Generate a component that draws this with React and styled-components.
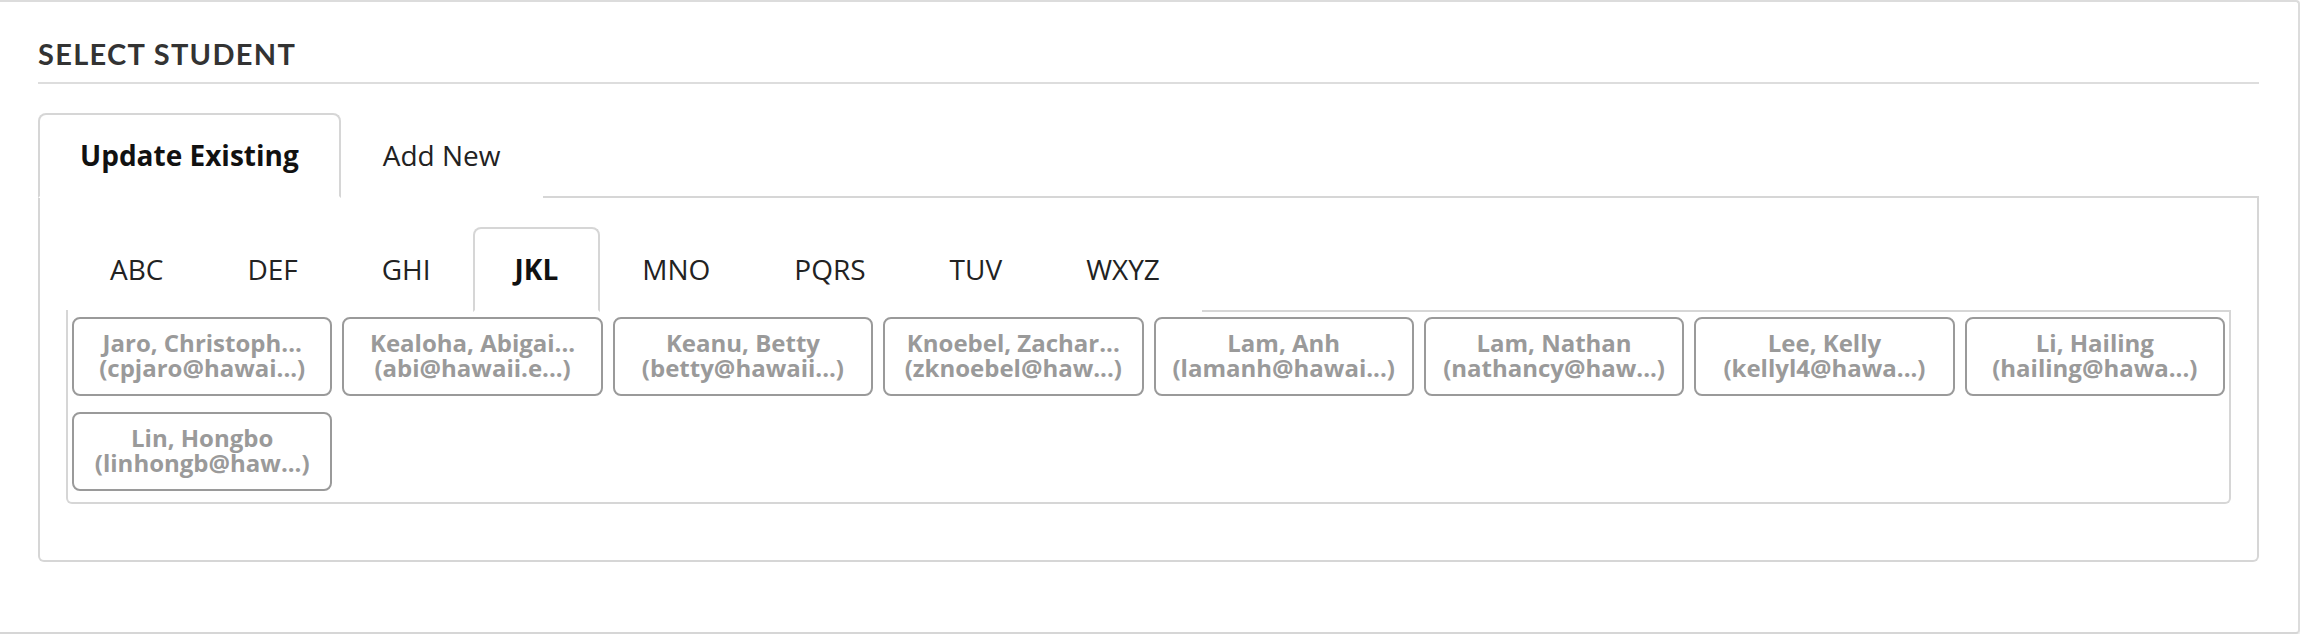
import React from "react";
import styled, { createGlobalStyle, css } from "styled-components";

const Global = createGlobalStyle`
  html, body { margin: 0; padding: 0; background: #ffffff; }
  body { font-family: "Open Sans", "Liberation Sans", sans-serif; color: #222; }
  * { box-sizing: border-box; }
`;

const Card = styled.section`
  width: 2300px;
  border-top: 2px solid #dcdcdc;
  border-right: 2px solid #dcdcdc;
  border-bottom: 2px solid #d6d6d6;
  border-radius: 0 4px 4px 0;
  box-shadow: 0 3px 4px rgba(0, 0, 0, 0.1);
  padding: 0 39px 70px 38px;
`;

const Title = styled.h2`
  margin: 0;
  padding: 34px 0 10px;
  font-family: Lato, "Open Sans", sans-serif;
  font-weight: 700;
  font-size: 29px;
  line-height: 36px;
  letter-spacing: 1.3px;
  color: #333;
  border-bottom: 2px solid #dddddd;
`;

const TabList = styled.div`
  display: flex;
  align-items: flex-end;
  border-bottom: 2px solid #d6d6d6;
  margin-top: ${(p) => (p.$outer ? "29px" : "0")};
  padding-left: ${(p) => (p.$outer ? "0" : "2px")};
`;

const Tab = styled.button`
  appearance: none;
  background: #fff;
  font-family: "Open Sans", "Liberation Sans", sans-serif;
  font-size: 28px;
  line-height: 42px;
  padding: 19px 40px 20px;
  margin: 0 0 -2px;
  border: 2px solid transparent;
  border-radius: 8px 8px 0 0;
  color: #222;
  font-weight: 400;
  cursor: pointer;
  ${(p) =>
    p.$active &&
    css`
      border-color: #d6d6d6;
      border-bottom-color: #fff;
      font-weight: 700;
      color: #111;
    `}
`;

const Panel = styled.div`
  border: 2px solid #d6d6d6;
  border-top: none;
  border-radius: 0 0 6px 6px;
  padding: ${(p) => (p.$inner ? "5px 4px 11px" : "29px 26px 56px")};
`;

const Grid = styled.div`
  display: grid;
  grid-template-columns: repeat(8, 1fr);
  column-gap: 10px;
  row-gap: 16px;
`;

const StudentButton = styled.button`
  appearance: none;
  background: #fff;
  border: 2px solid #9a9a9a;
  border-radius: 8px;
  padding: 11px 6px 14px;
  font-family: "Open Sans", "Liberation Sans", sans-serif;
  font-weight: 700;
  font-size: 24px;
  line-height: 25px;
  color: #9a9a9a;
  text-align: center;
  white-space: nowrap;
  overflow: hidden;
  cursor: pointer;
`;

const Line = styled.span`
  display: block;
`;

const letters = ["ABC", "DEF", "GHI", "JKL", "MNO", "PQRS", "TUV", "WXYZ"];

const students = [
  ["Jaro, Christoph...", "(cpjaro@hawai...)"],
  ["Kealoha, Abigai...", "(abi@hawaii.e...)"],
  ["Keanu, Betty", "(betty@hawaii...)"],
  ["Knoebel, Zachar...", "(zknoebel@haw...)"],
  ["Lam, Anh", "(lamanh@hawai...)"],
  ["Lam, Nathan", "(nathancy@haw...)"],
  ["Lee, Kelly", "(kellyl4@hawa...)"],
  ["Li, Hailing", "(hailing@hawa...)"],
  ["Lin, Hongbo", "(linhongb@haw...)"],
];

export default function App() {
  return (
    <>
      <Global />
      <Card>
        <Title>SELECT STUDENT</Title>
        <TabList $outer>
          <Tab $active>Update Existing</Tab>
          <Tab>Add New</Tab>
        </TabList>
        <Panel>
          <TabList>
            {letters.map((l) => (
              <Tab key={l} $active={l === "JKL"}>
                {l}
              </Tab>
            ))}
          </TabList>
          <Panel $inner>
            <Grid>
              {students.map(([name, email]) => (
                <StudentButton key={name}>
                  <Line>{name}</Line>
                  <Line>{email}</Line>
                </StudentButton>
              ))}
            </Grid>
          </Panel>
        </Panel>
      </Card>
    </>
  );
}
